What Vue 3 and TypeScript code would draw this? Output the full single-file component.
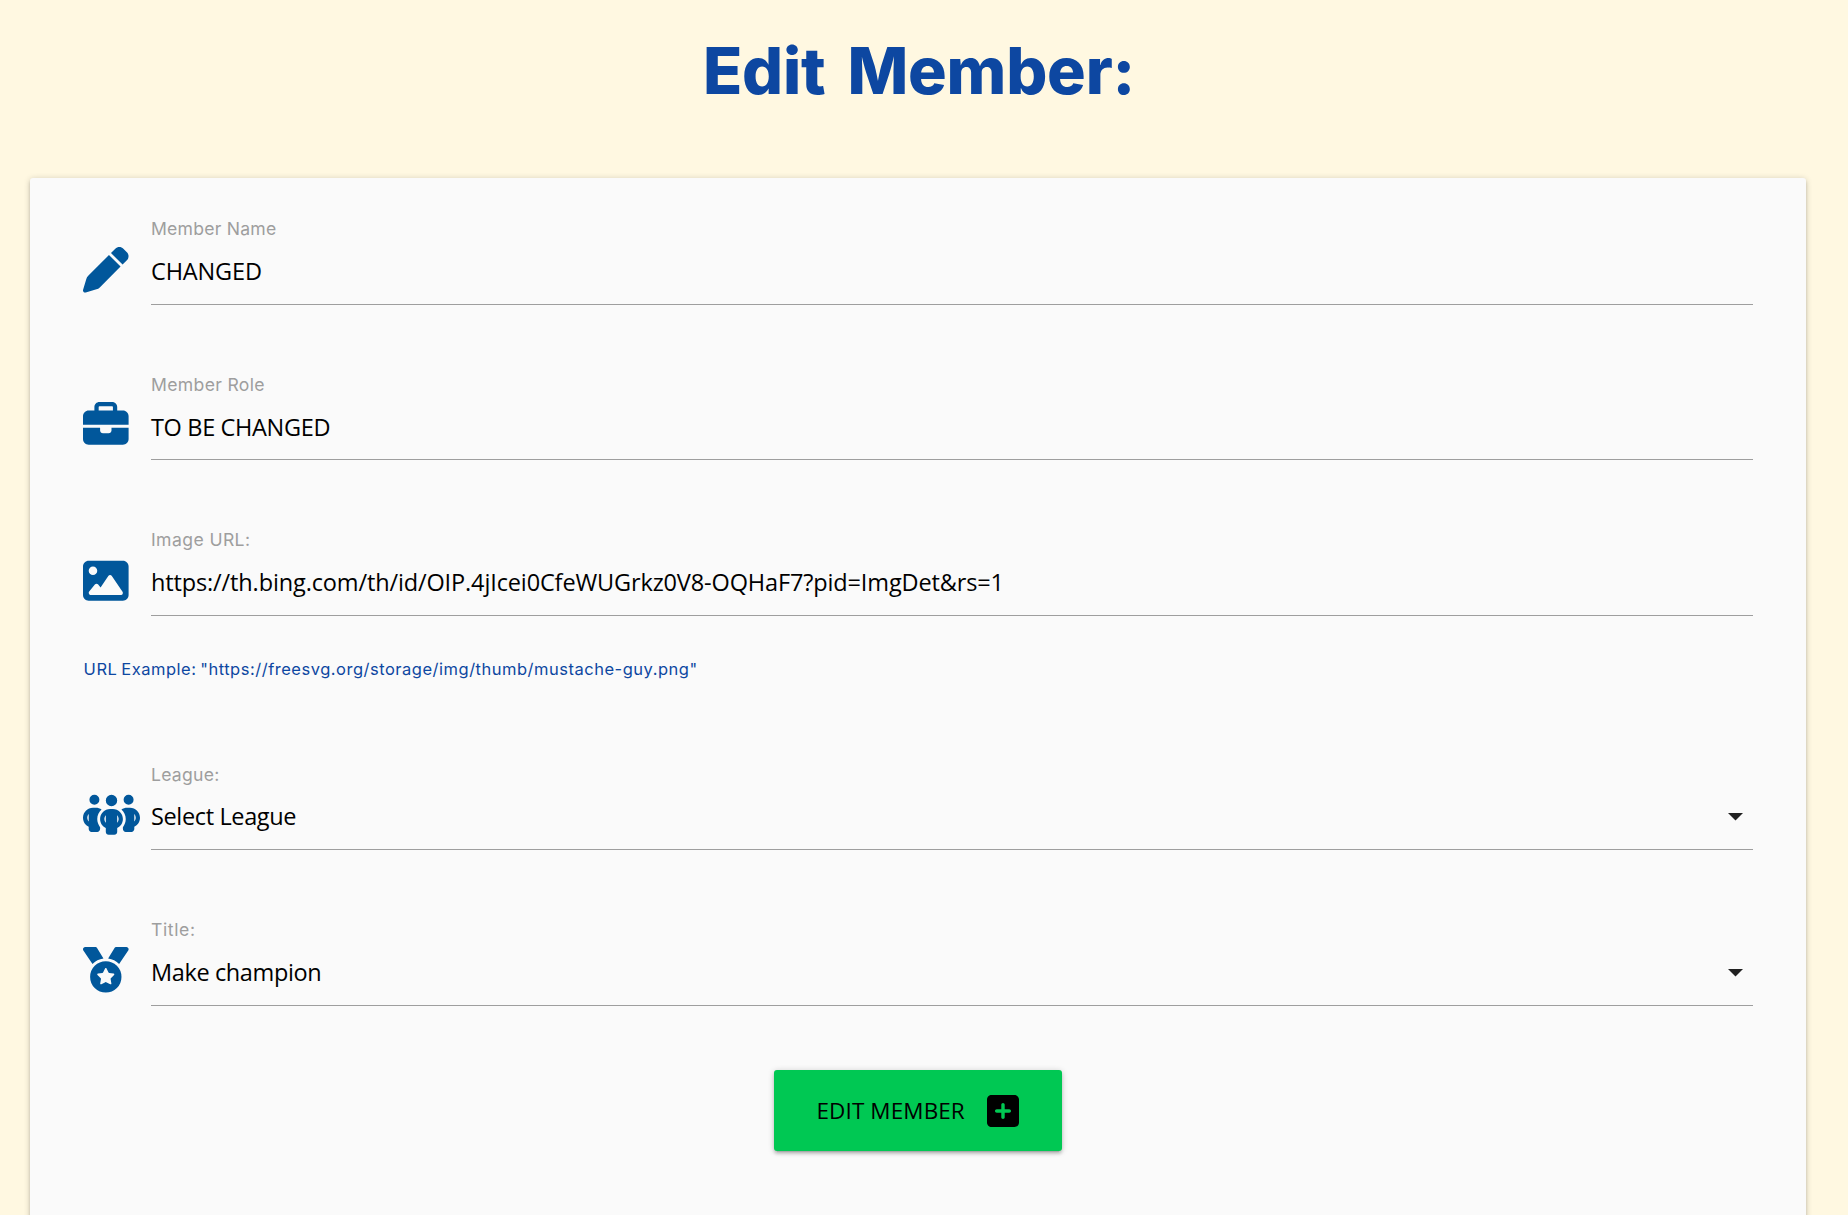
<script setup lang="ts">
interface Icon {
  viewBox: string
  path: string
  wide?: boolean
}

interface Field {
  id: string
  label: string
  labelSpacing: number
  value: string
  valueSpacing: number
  icon: Icon
  select?: boolean
  hint?: string
}

const pen: Icon = {
  viewBox: '0 0 512 512',
  path: 'M362.7 19.3L314.3 67.7 444.3 197.7l48.4-48.4c25-25 25-65.5 0-90.5L453.3 19.3c-25-25-65.5-25-90.5 0zm-71 71L58.6 323.5c-10.4 10.4-18 23.3-22.2 37.4L1 481.2C-1.5 489.7 .8 498.8 7 505s15.3 8.5 23.7 6.1l120.3-35.4c14.1-4.2 27-11.8 37.4-22.2L421.7 220.3 291.7 90.3z',
}
const briefcase: Icon = {
  viewBox: '0 0 512 512',
  path: 'M184 48H328c4.4 0 8 3.6 8 8V96H176V56c0-4.4 3.6-8 8-8zm-56 8V96H64C28.7 96 0 124.7 0 160v96H192 320 512V160c0-35.3-28.7-64-64-64H384V56c0-30.9-25.1-56-56-56H184c-30.9 0-56 25.1-56 56zM512 288H320v32c0 17.7-14.3 32-32 32H224c-17.7 0-32-14.3-32-32V288H0V416c0 35.3 28.7 64 64 64H448c35.3 0 64-28.7 64-64V288z',
}
const image: Icon = {
  viewBox: '0 0 512 512',
  path: 'M0 96C0 60.7 28.7 32 64 32H448c35.3 0 64 28.7 64 64V416c0 35.3-28.7 64-64 64H64c-35.3 0-64-28.7-64-64V96zM323.8 202.5c-4.5-6.6-11.9-10.5-19.8-10.5s-15.4 3.9-19.8 10.5l-87 127.6L170.7 297c-4.6-5.7-11.5-9-18.7-9s-14.2 3.3-18.7 9l-64 80c-5.8 7.2-6.9 17.1-2.9 25.4s12.4 13.6 21.6 13.6h96 32H424c8.9 0 17.1-4.9 21.2-12.8s3.6-17.4-1.4-24.7l-120-176zM112 192a48 48 0 1 0 0-96 48 48 0 1 0 0 96z',
}
const people: Icon = {
  viewBox: '0 0 640 512',
  wide: true,
  path: 'M72 88a56 56 0 1 1 112 0A56 56 0 1 1 72 88zM64 245.7C54 256.9 48 271.8 48 288s6 31.1 16 42.3V245.7zm144.4-49.3C178.7 222.7 160 261.2 160 304c0 34.3 12 65.8 32 90.5V416c0 17.7-14.3 32-32 32H96c-17.7 0-32-14.3-32-32V389.2C26.2 371.2 0 332.7 0 288c0-61.9 50.1-112 112-112h32c24 0 46.2 7.5 64.4 20.3zM448 416V394.5c20-24.7 32-56.2 32-90.5c0-42.8-18.7-81.3-48.4-107.7C449.8 183.5 472 176 496 176h32c61.9 0 112 50.1 112 112c0 44.7-26.2 83.2-64 101.2V416c0 17.7-14.3 32-32 32H480c-17.7 0-32-14.3-32-32zm8-328a56 56 0 1 1 112 0A56 56 0 1 1 456 88zM576 245.7v84.7c10-11.3 16-26.1 16-42.3s-6-31.1-16-42.3zM320 32a64 64 0 1 1 0 128 64 64 0 1 1 0-128zM240 304c0 16.2 6 31 16 42.3V261.7c-10 11.3-16 26.1-16 42.3zm144-42.3v84.7c10-11.3 16-26.1 16-42.3s-6-31.1-16-42.3zM448 304c0 44.7-26.2 83.2-64 101.2V448c0 17.7-14.3 32-32 32H288c-17.7 0-32-14.3-32-32V405.2c-37.8-18-64-56.5-64-101.2c0-61.9 50.1-112 112-112h32c61.9 0 112 50.1 112 112z',
}
const medal: Icon = {
  viewBox: '0 0 512 512',
  path: 'M4.1 38.2C1.4 34.2 0 29.4 0 24.6C0 11 11 0 24.6 0H133.9c11.2 0 21.7 5.9 27.4 15.5l68.5 114.1c-48.2 6.1-91.3 28.6-123.4 61.9L4.1 38.2zm503.7 0L405.6 191.5c-32.1-33.3-75.2-55.8-123.4-61.9L350.7 15.5C356.5 5.9 366.9 0 378.1 0H487.4C501 0 512 11 512 24.6c0 4.8-1.4 9.6-4.1 13.6zM80 336a176 176 0 1 1 352 0A176 176 0 1 1 80 336zm184.4-94.9c-3.4-7-13.3-7-16.8 0l-22.4 45.4c-1.4 2.8-4 4.7-7 5.1L168 298.9c-7.7 1.1-10.7 10.5-5.2 16l36.3 35.4c2.2 2.2 3.2 5.2 2.7 8.3l-8.6 49.9c-1.3 7.6 6.7 13.5 13.6 9.9l44.8-23.6c2.7-1.4 6-1.4 8.7 0l44.8 23.6c6.9 3.6 14.9-2.2 13.6-9.9l-8.6-49.9c-.5-3 .5-6.1 2.7-8.3l36.3-35.4c5.6-5.4 2.5-14.8-5.2-16l-50.1-7.3c-3-.4-5.7-2.4-7-5.1l-22.4-45.4z',
}

const fields: Field[] = [
  { id: 'name', label: 'Member Name', labelSpacing: 0.23, value: 'CHANGED', valueSpacing: -0.15, icon: pen },
  { id: 'role', label: 'Member Role', labelSpacing: 0.33, value: 'TO BE CHANGED', valueSpacing: -0.34, icon: briefcase },
  {
    id: 'image',
    label: 'Image URL:',
    labelSpacing: 0.4,
    value: 'https://th.bing.com/th/id/OIP.4jIcei0CfeWUGrkz0V8-OQHaF7?pid=ImgDet&rs=1',
    valueSpacing: -0.13,
    icon: image,
    hint: 'URL Example: "https://freesvg.org/storage/img/thumb/mustache-guy.png"',
  },
  { id: 'league', label: 'League:', labelSpacing: 0.25, value: 'Select League', valueSpacing: -0.36, icon: people, select: true },
  { id: 'title', label: 'Title:', labelSpacing: 0.6, value: 'Make champion', valueSpacing: -0.38, icon: medal, select: true },
]
</script>

<template>
  <main class="page">
    <h1 class="heading">Edit Member:</h1>
    <form class="card" @submit.prevent>
      <template v-for="field in fields" :key="field.id">
        <div class="field" :class="`field-${field.id}`">
          <svg class="icon" :class="{ wide: field.icon.wide }" :viewBox="field.icon.viewBox" aria-hidden="true">
            <path :d="field.icon.path" />
          </svg>
          <div class="control">
            <div class="label" :style="{ letterSpacing: field.labelSpacing + 'px' }">{{ field.label }}</div>
            <div class="value">
              <span :style="{ letterSpacing: field.valueSpacing + 'px' }">{{ field.value }}</span>
              <svg v-if="field.select" class="caret" viewBox="0 0 15 8" aria-hidden="true"><path d="M0 0h15L7.5 7.5z" /></svg>
            </div>
          </div>
        </div>
        <p v-if="field.hint" class="hint">{{ field.hint }}</p>
      </template>
      <button class="submit" type="submit">
        <span>EDIT MEMBER</span>
        <svg class="plus" viewBox="0 32 448 448" aria-hidden="true">
          <path d="M64 32C28.7 32 0 60.7 0 96V416c0 35.3 28.7 64 64 64H384c35.3 0 64-28.7 64-64V96c0-35.3-28.7-64-64-64H64zM200 344V280H136c-13.3 0-24-10.7-24-24s10.7-24 24-24h64V168c0-13.3 10.7-24 24-24s24 10.7 24 24v64h64c13.3 0 24 10.7 24 24s-10.7 24-24 24H248v64c0 13.3-10.7 24-24 24s-24-10.7-24-24z" />
        </svg>
      </button>
    </form>
  </main>
</template>

<style>
body {
  background: #fff8e1;
  overflow: hidden;
}
</style>

<style scoped>
.page {
  box-sizing: border-box;
  height: 1215px;
  padding: 0 42px 0 30px;
  overflow: hidden;
  display: flex;
  flex-direction: column;
  background: #fff8e1;
  font-family: Inter, sans-serif;
}
.heading {
  flex: none;
  height: 178px;
  margin: 0;
  padding: 31.5px 0 0 2px;
  box-sizing: border-box;
  text-align: center;
  font-size: 64.5px;
  font-weight: 800;
  line-height: 78px;
  letter-spacing: -0.2px;
  word-spacing: 8px;
  color: #0d47a1;
}
.card {
  box-sizing: border-box;
  flex: none;
  height: 1100px;
  padding: 39px 53px 0;
  display: flex;
  flex-direction: column;
  background: #fafafa;
  border-radius: 3px;
  box-shadow: 0 3px 3px 0 rgba(0, 0, 0, 0.14), 0 4px 1px -3px rgba(0, 0, 0, 0.12), 0 1px 6px 0 rgba(0, 0, 0, 0.2);
}
.field {
  flex: none;
  display: flex;
  align-items: flex-start;
  height: 88px;
  margin-bottom: 67px;
}
.field-role {
  margin-bottom: 68px;
}
.field-image {
  margin-bottom: 41px;
}
.field-league {
  margin-bottom: 68px;
}
.field-title {
  margin-bottom: 64px;
}
.icon {
  flex: none;
  width: 45.6px;
  height: 45.6px;
  margin: 30.4px 22px 0 0.4px;
  fill: #01579b;
}
.icon.wide {
  width: 57px;
  margin-right: 10.6px;
}
.field-title .icon {
  margin-top: 29.4px;
}
.control {
  flex: 1;
  height: 88px;
  box-sizing: border-box;
  border-bottom: 1px solid #9e9e9e;
}
.label {
  height: 24px;
  font-size: 17.6px;
  line-height: 24px;
  color: #9e9e9e;
}
.field-role .label,
.field-league .label {
  padding-top: 1px;
  height: 23px;
}
.value {
  display: flex;
  align-items: center;
  justify-content: space-between;
  height: 61px;
  padding-right: 10.5px;
  font-family: 'Open Sans', sans-serif;
  font-size: 23.5px;
  line-height: 61px;
  color: #000;
  white-space: nowrap;
}
.field-role .value {
  height: 63px;
}
.caret {
  width: 15px;
  height: 8px;
  fill: #212121;
}
.hint {
  flex: none;
  height: 24px;
  margin: 0 0 81px 0.6px;
  font-size: 16.5px;
  line-height: 24px;
  letter-spacing: 0.51px;
  word-spacing: -1.3px;
  color: #0d47a1;
}
.submit {
  flex: none;
  align-self: center;
  display: flex;
  align-items: center;
  width: 288px;
  height: 81px;
  padding: 0 43px 0 42.5px;
  justify-content: space-between;
  border: 0;
  border-radius: 3px;
  background: #00c853;
  color: #000;
  font-family: 'Open Sans', sans-serif;
  font-size: 22.5px;
  letter-spacing: 0.1px;
  box-shadow: 0 3px 3px 0 rgba(0, 0, 0, 0.14), 0 4px 1px -3px rgba(0, 0, 0, 0.12), 0 1px 6px 0 rgba(0, 0, 0, 0.2);
}
.plus {
  width: 32px;
  height: 32px;
}
</style>
